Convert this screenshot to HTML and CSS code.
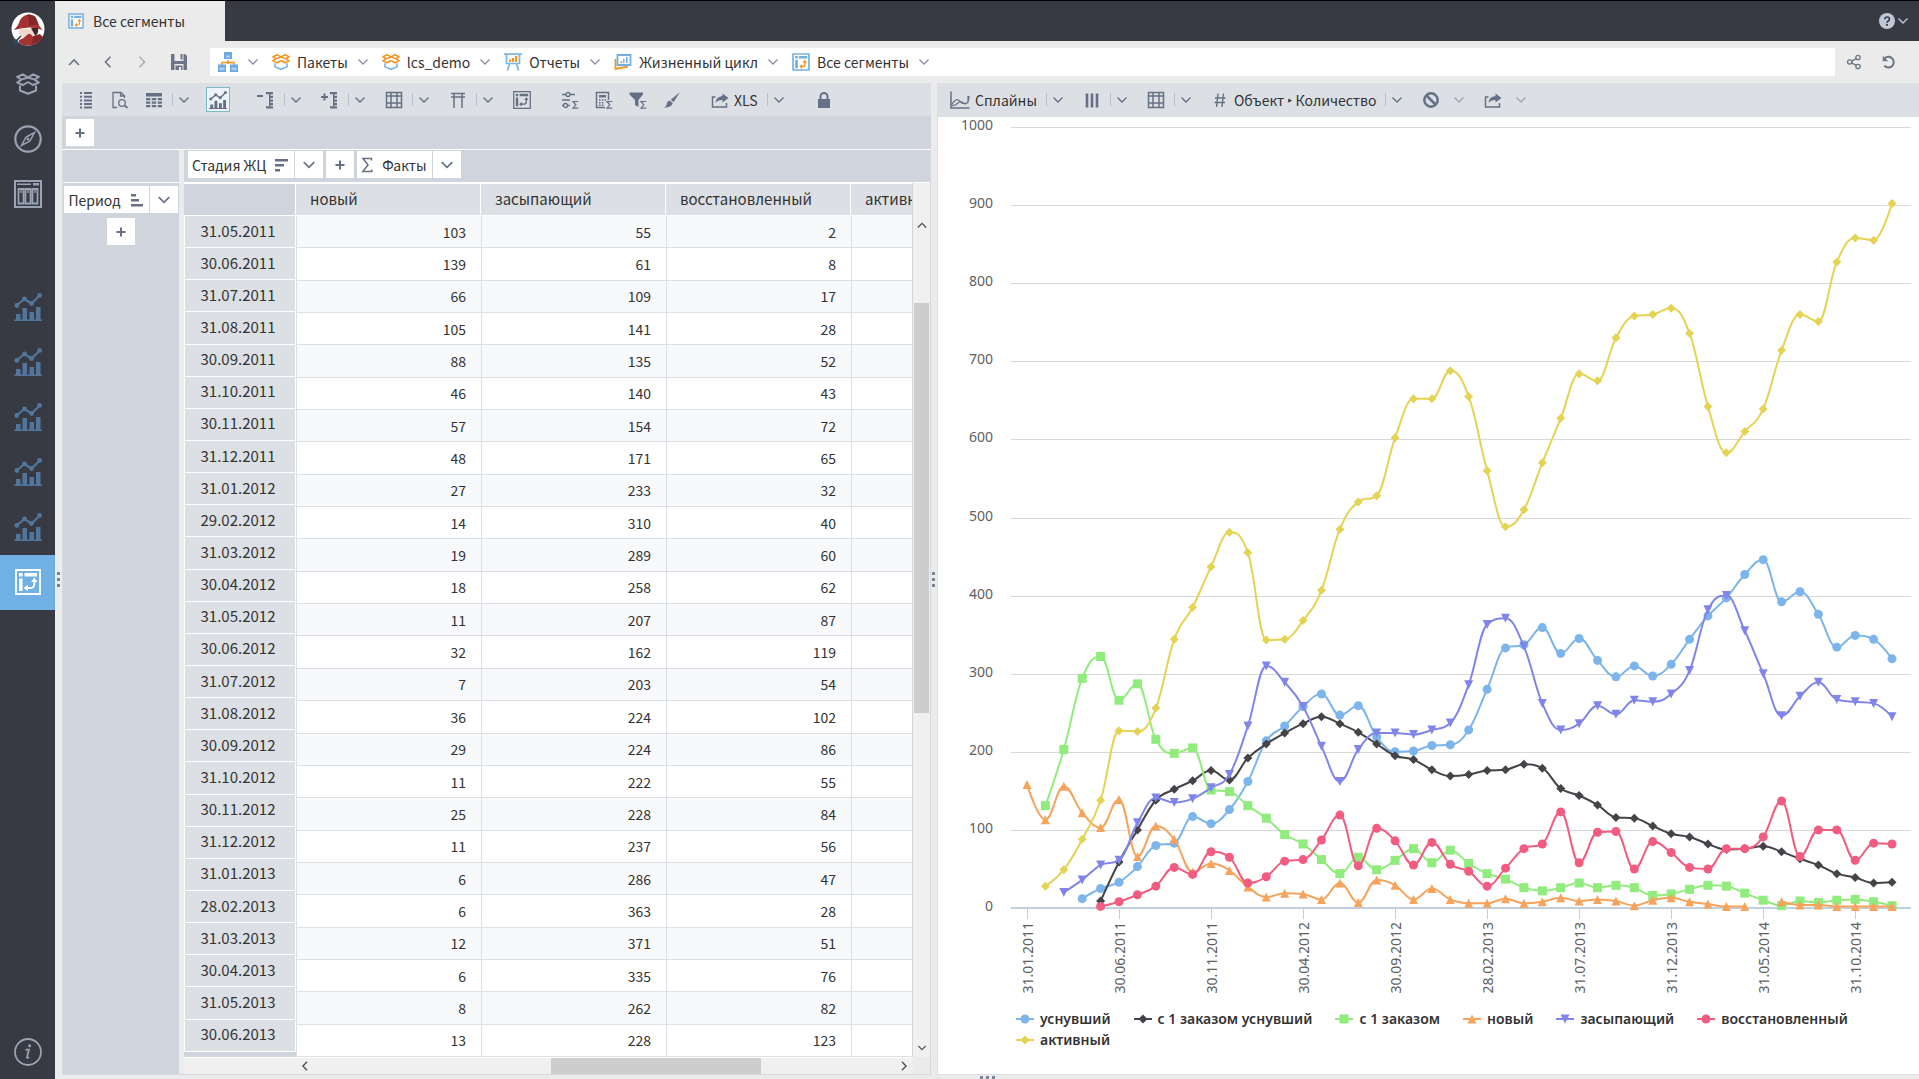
FILE: index.html
```html
<!DOCTYPE html>
<html lang="ru">
<head>
<meta charset="utf-8">
<meta name="viewport" content="width=device-width, initial-scale=1">
<title>Все сегменты</title>
<link rel="stylesheet" href="styles.css">
</head>
<body>
<svg class="defs" aria-hidden="true">
  <symbol id="i-down" viewBox="0 0 12 12"><path d="M1.5 3.5 6 8l4.500-4.500" fill="none" stroke="currentColor" stroke-width="1.400"/></symbol>
  <symbol id="i-up" viewBox="0 0 12 12"><path d="M1 9l5-5 5 5" fill="none" stroke="currentColor" stroke-width="1.600"/></symbol>
  <symbol id="i-left" viewBox="0 0 12 12"><path d="M8.500.8 3.500 6l5 5.200" fill="none" stroke="currentColor" stroke-width="1.600"/></symbol>
  <symbol id="i-right" viewBox="0 0 12 12"><path d="M3.500.8 8.500 6l-5 5.200" fill="none" stroke="currentColor" stroke-width="1.600"/></symbol>
  <symbol id="i-save" viewBox="0 0 18 18"><path d="M1 1h3.500v7h9V1H15l2 2v14h-3.500v-6h-9v6H1zM10.500 1h2v5.500h-2zM5.500 12.500h7V17H11v-3H9v3H5.500z" fill="currentColor"/></symbol>
  <symbol id="i-box" viewBox="1 0 24 22"><g fill="none" stroke-width="2" stroke-linejoin="round"><path class="hi" d="M13 4.500 8 1.300 2.200 4l4.200 2.600zM13 4.500l5-3.200L23.800 4l-4.200 2.600zM6.400 6.600 2.200 9.500 8 12l5-3M19.600 6.600l4.200 2.900L18 12l-5-3" stroke="currentColor"/><path class="lo" d="M5 12.500v5l8 3.200 8-3.200v-5" stroke="currentColor"/></g></symbol>
  <symbol id="i-compass" viewBox="0 0 28 28"><g fill="none" stroke="currentColor"><circle cx="14" cy="14" r="12.700" stroke-width="2.200"/><path d="M20.500 7.500 16 16l-8.500 4.500L12 12z" stroke-width="1.500"/></g><circle cx="14" cy="14" r="1.500" fill="currentColor"/></symbol>
  <symbol id="i-cabinet" viewBox="0 0 28 28"><g fill="none" stroke="currentColor" stroke-width="2"><path d="M1 1h26v26H1z"/><path d="M4.500 9h5v14.500h-5zM11.500 9h5v14.500h-5zM18.500 9h5v14.500h-5z" stroke-width="1.800"/></g><path d="M3 3.500h14V5H3zM19 3h6v2.500h-6zM6.300 9h1.400v4H6.300zM13.300 9h1.400v4h-1.400zM20.300 9h1.400v4h-1.400z" fill="currentColor"/></symbol>
  <symbol id="i-chart" viewBox="0 0 28 28"><path d="M2.500 12.500 10.500 6l7 4.500 8.300-8" fill="none" stroke="currentColor" stroke-width="2.200"/><g fill="currentColor"><circle cx="2.800" cy="12.500" r="2.400"/><circle cx="10.500" cy="5.800" r="2.400"/><circle cx="17.500" cy="10.500" r="2.400"/><circle cx="25.600" cy="2.400" r="2.400"/><path d="M2 21h4.500v6H2zM8.500 15H13v12H8.500zM15.500 19H20v8h-4.500zM22 14h4.500v13H22zM0 26.500h28V28H0z"/></g></symbol>
  <symbol id="i-pivot" viewBox="0 0 26 26"><path d="M1 1h24v24H1z" fill="none" stroke="currentColor" stroke-width="1.800"/><path d="M4 4h3.500v3.500H4zM9.500 4H22v3.500H9.500zM4 9.500h3.500V22H4zM19.300 8.500l3.200 4.500h-6.400zM8.500 19l4.500-3.200v6.400z" fill="currentColor"/><path d="M19.300 12.500v2.500q0 4-4 4H12" fill="none" stroke="currentColor" stroke-width="1.800"/></symbol>
  <symbol id="i-pivot-color" viewBox="0 0 26 26"><path d="M1.500 1.500h23v23h-23z" fill="#fff" stroke="#74b0e2" stroke-width="2.400"/><path d="M4.500 4.500h4v3.500h-4zM10 4.500h12V8H10zM4.500 10h4v12h-4z" fill="#74b0e2"/><path d="M18.500 14v2.500q0 3-3 3H14" fill="none" stroke="#f7931e" stroke-width="2"/><path d="M18.500 9.500 22 14h-7zM10.500 19.500l4-3.500v7z" fill="#f7931e"/></symbol>
  <symbol id="i-info" viewBox="0 0 28 28"><circle cx="14" cy="14" r="13" fill="none" stroke="currentColor" stroke-width="1.800"/><path d="M12 11.500h3l-2 7.500q-.3 1.500 2.200.2M11.500 12.300l2-.8" fill="none" stroke="currentColor" stroke-width="1.700"/><circle cx="15.600" cy="7.800" r="1.500" fill="currentColor"/></symbol>
  <symbol id="i-list" viewBox="0 0 18 18"><path d="M3 1h2v2H3zM7 1h8v2H7zM3 4.700h2v2H3zM7 4.700h8v2H7zM3 8.400h2v2H3zM7 8.400h8v2H7zM3 12h2v2H3zM7 12h8v2H7zM3 15.600h2v2H3zM7 15.600h8v2H7z" fill="currentColor"/></symbol>
  <symbol id="i-preview" viewBox="0 0 18 18"><g fill="none" stroke="currentColor" stroke-width="1.300"><path d="M6 16.500H2V1.500h8L13.500 5v2M9.500 1.500V5h4"/><circle cx="11" cy="12" r="3.300"/><path d="m13.500 14.300 3 2.700" stroke-width="1.800"/></g></symbol>
  <symbol id="i-table" viewBox="0 0 18 18"><path d="M1 2h16v3.500H1zM1 7h4.300v2.200H1zM6.800 7h4.400v2.200H6.800zM12.700 7H17v2.200h-4.300zM1 10.500h4.300v2.200H1zM6.800 10.500h4.400v2.200H6.800zM12.700 10.500H17v2.200h-4.300zM1 14h4.300v2.200H1zM6.800 14h4.400v2.200H6.800zM12.700 14H17v2.200h-4.300z" fill="currentColor"/></symbol>
  <symbol id="i-collapse" viewBox="0 0 18 18"><path d="M0 4h6v2H0zM9 1h7v2.200H9zM12 4.800h4V7h-4zM12 8.500h4v2.200h-4zM12 12h4v2.200h-4zM9 15.300h7v2.200H9zM12 3h1.500v12H12z" fill="currentColor"/></symbol>
  <symbol id="i-expand" viewBox="0 0 18 18"><path d="M0 5h7v2H0zM2.500 2.500h2v7h-2zM9 1h7v2.200H9zM12 4.800h4V7h-4zM12 8.500h4v2.200h-4zM12 12h4v2.200h-4zM9 15.300h7v2.200H9zM12 3h1.500v12H12z" fill="currentColor"/></symbol>
  <symbol id="i-grid" viewBox="0 0 18 18"><path d="M1.500 1.500h15v15h-15zM6 1.500v15M12 1.500v15M1.500 5h15M1.500 12h15" fill="none" stroke="currentColor" stroke-width="1.500"/></symbol>
  <symbol id="i-merge" viewBox="0 0 18 18"><path d="M2 2.500h14M2 6h14M5 2.500V17M13 2.500V17" fill="none" stroke="currentColor" stroke-width="1.500"/></symbol>
  <symbol id="i-sliders" viewBox="0 0 18 18"><path d="M1 3.500h13M1 9h8M1 14.500h8" stroke="currentColor" stroke-width="1.600"/><circle cx="7" cy="3.500" r="2" fill="#dce0e4" stroke="currentColor" stroke-width="1.300"/><circle cx="4.500" cy="14.500" r="2" fill="#dce0e4" stroke="currentColor" stroke-width="1.300"/><path d="M17.300 10.500H12l2.800 3.300L12 17.200h5.300" fill="none" stroke="currentColor" stroke-width="1.200"/></symbol>
  <symbol id="i-calc" viewBox="0 0 18 18"><path d="M10 16.500H1.500v-15h12V9" fill="none" stroke="currentColor" stroke-width="1.500"/><path d="M4 4h7v2.500H4zM4 8.200h1.600v1.500H4zM6.800 8.200h1.600v1.500H6.800zM9.500 8.200h1.600v1.500H9.500zM4 11h1.600v1.500H4zM6.800 11h1.600v1.500H6.800zM4 13.500h1.600V15H4zM6.800 13.500h1.600V15H6.800z" fill="currentColor"/><path d="M17.300 10.500H12l2.800 3.300L12 17.200h5.300" fill="none" stroke="currentColor" stroke-width="1.200"/></symbol>
  <symbol id="i-filter" viewBox="0 0 18 18"><path d="M.5 1.500h13.500v2L9.500 9v7L6 14V9L.5 3.500z" fill="currentColor"/><path d="M17.300 10.500H12l2.800 3.300L12 17.200h5.300" fill="none" stroke="currentColor" stroke-width="1.200"/></symbol>
  <symbol id="i-brush" viewBox="0 0 18 18"><path d="M17 1 10.500 11.200 7.800 8.800zM7 9.800l2.700 2.500q-1 4.200-8.700 4.400 2.500-1 2.700-3.500Q4.200 9.800 7 9.800" fill="currentColor"/></symbol>
  <symbol id="i-export" viewBox="0 0 18 18"><path d="M4.500 6H1.500v10h14v-4" fill="none" stroke="currentColor" stroke-width="1.500"/><path d="M11.500 2.500 17.500 7l-6 4.500V9Q7 8.700 4.500 12 5 5.500 11.500 5z" fill="currentColor"/></symbol>
  <symbol id="i-lock" viewBox="0 0 18 18"><path d="M3 8h12v9H3z" fill="currentColor"/><path d="M5.500 8V5.500a3.500 3.500 0 0 1 7 0V8" fill="none" stroke="currentColor" stroke-width="2"/></symbol>
  <symbol id="i-spline" viewBox="0 0 20 18"><path d="M1 .5V17h18.500" fill="none" stroke="currentColor" stroke-width="1.500"/><path d="M1.500 14q4.500-8 8-4t8.500 1.500V5M2 15q4-1 6-3t4-1q3 3 5 1t2-7" fill="none" stroke="currentColor" stroke-width="1.200"/></symbol>
  <symbol id="i-bars" viewBox="0 0 18 18"><path d="M4 2.500v14M9 2.500v14M14 2.500v14" stroke="currentColor" stroke-width="2.600"/></symbol>
  <symbol id="i-hash" viewBox="0 0 18 18"><path d="M7 2.500 5.500 16M12.500 2.500 11 16M4 7h10.500M3.500 11.500H14" fill="none" stroke="currentColor" stroke-width="1.400"/></symbol>
  <symbol id="i-ban" viewBox="0 0 18 18"><g fill="none" stroke="currentColor" stroke-width="2.500"><circle cx="9" cy="9" r="6.700"/><path d="m4.500 4.500 9 9"/></g></symbol>
  <symbol id="i-share" viewBox="0 0 18 18"><g fill="none" stroke="currentColor" stroke-width="1.500"><circle cx="4.200" cy="9" r="2.400"/><circle cx="13.500" cy="4" r="2.400"/><circle cx="13.500" cy="14" r="2.400"/><path d="m6.400 8 5-2.800M6.400 10l5 2.800"/></g></symbol>
  <symbol id="i-undo" viewBox="0 0 18 18"><path d="M4.200 4.800a6 6 0 1 1-.5 8.200" fill="none" stroke="currentColor" stroke-width="2.300"/><path d="M2 2v6.200h6.200z" fill="currentColor"/></symbol>
  <symbol id="i-help" viewBox="0 0 18 18"><circle cx="9" cy="9" r="9" fill="currentColor"/><path d="M6.500 7q.2-2.500 2.700-2.500T11.700 7q0 1.200-1.400 2Q9 9.700 9 11" fill="none" stroke="#383a43" stroke-width="1.800"/><circle cx="9" cy="13.300" r="1.200" fill="#383a43"/></symbol>
  <symbol id="i-sitemap" viewBox="0 0 20 20"><path d="M10 8v4M4 13v-2.500h12V13" fill="none" stroke="#f7931e" stroke-width="1.600"/><path d="M6 0h8v7H6zM0 12.500h8V20H0zM12 12.500h8V20h-8z" fill="#6ba9e0"/><path d="M8 3.500h4v2H8zM1.500 15.500h5v2.700h-5zM13.500 15.500h5v2.700h-5z" fill="#a9d2f5"/></symbol>
  <symbol id="i-easel" viewBox="0 0 18 18"><path d="M2.500 2v8.500h13V2M0 1.200h18M5.500 11 3.500 17.500M12.500 11l2 6.500" fill="none" stroke="#7ab6e6" stroke-width="1.700"/><path d="M5 6.500h2V9H5zM8 5h2v4H8zM11 3h2v6h-2z" fill="#f7931e"/></symbol>
  <symbol id="i-slides" viewBox="0 0 18 18"><path d="M1.500 6v10l12.500-2.500" fill="none" stroke="#f7931e" stroke-width="1.800"/><path d="M3.500 2h13v10h-13z" fill="#fff" stroke="#74b0e2" stroke-width="1.800"/><path d="M6.500 8h1.500v2H6.500zM9 6h1.500v4H9zM12 4h1.500v6H12z" fill="#74b0e2"/></symbol>
  <symbol id="i-desc" viewBox="0 0 14 14"><path d="M0 1h13v2.500H0zM0 6h9v2.500H0zM0 11h5v2.500H0z" fill="currentColor"/></symbol>
  <symbol id="i-asc" viewBox="0 0 14 14"><path d="M1 1h5v2.500H1zM1 6h8v2.500H1zM1 11h12v2.500H1z" fill="currentColor"/></symbol>
  <symbol id="i-plus" viewBox="0 0 12 12"><path d="M6 1.500v9M1.500 6h9" stroke="currentColor" stroke-width="2"/></symbol>
  <symbol id="i-sigma" viewBox="0 0 12 16"><path d="M10.500 3.500V1.500H2L7 8l-5.200 6.500h9v-2" fill="none" stroke="currentColor" stroke-width="1.500"/></symbol>
  <symbol id="i-logo" viewBox="0 0 34 34"><circle cx="17" cy="17" r="16.500" fill="#fff"/><path d="M9 17h14l-1 9-6 1-6-3-2.500-3z" fill="#f0d9cc"/><path d="M3 18Q7 14 8 11q2-7.500 9-8.500 7.500-.5 9.500 7 1 4.500 5 8.500-6-2.500-13-2.500T3 18" fill="#a63232"/><path d="M17 2.500q7.500-.5 9.500 7l.8 3-9 1z" fill="#84282a"/><path d="M20 16h7q1 6-3 7.500z" fill="#3a2a2c"/><path d="M8 28q4-1 8.500-5.500 3-2 5 2L29 23l3 2q-4 8-14 8.500-5.500 0-10-2.500z" fill="#a63232"/><path d="M22 24l7-2 2.500 3Q28 31 21 33z" fill="#84282a"/><path d="M10 24l-4 4" stroke="#383a43" stroke-width="1.600"/><circle cx="4.500" cy="30" r="2.800" fill="#2f4760"/></symbol>
</svg>

<aside class="rail">
  <nav class="rail-group" aria-label="Разделы">
    <a class="rail-item" href="#" aria-label="Главная"><svg class="ic34"><use href="#i-logo"/></svg></a>
    <a class="rail-item" href="#" aria-label="Пакеты"><svg class="ic24"><use href="#i-box"/></svg></a>
    <a class="rail-item" href="#" aria-label="Навигатор"><svg class="ic28"><use href="#i-compass"/></svg></a>
    <a class="rail-item" href="#" aria-label="Архив"><svg class="ic28"><use href="#i-cabinet"/></svg></a>
  </nav>
  <nav class="rail-group rail-open" aria-label="Открытые отчеты">
    <a class="rail-item" href="#" aria-label="Отчет 1"><svg class="ic28"><use href="#i-chart"/></svg></a>
    <a class="rail-item" href="#" aria-label="Отчет 2"><svg class="ic28"><use href="#i-chart"/></svg></a>
    <a class="rail-item" href="#" aria-label="Отчет 3"><svg class="ic28"><use href="#i-chart"/></svg></a>
    <a class="rail-item" href="#" aria-label="Отчет 4"><svg class="ic28"><use href="#i-chart"/></svg></a>
    <a class="rail-item" href="#" aria-label="Отчет 5"><svg class="ic28"><use href="#i-chart"/></svg></a>
    <a class="rail-item active" href="#" aria-label="Все сегменты"><svg class="ic26"><use href="#i-pivot"/></svg></a>
  </nav>
  <a class="rail-item rail-info" href="#" aria-label="О системе"><svg class="ic28"><use href="#i-info"/></svg></a>
</aside>

<div class="app">
  <header class="titlebar">
    <a class="tab" href="#"><svg class="ic16"><use href="#i-pivot-color"/></svg>Все сегменты</a>
    <button class="help" aria-label="Справка"><svg class="ic16"><use href="#i-help"/></svg><svg class="ic12"><use href="#i-down"/></svg></button>
  </header>

  <div class="navbar">
    <div class="nav-tools">
      <button aria-label="Вверх"><svg class="ic12"><use href="#i-up"/></svg></button>
      <button aria-label="Назад"><svg class="ic12"><use href="#i-left"/></svg></button>
      <button class="dim" aria-label="Вперед"><svg class="ic12"><use href="#i-right"/></svg></button>
      <button aria-label="Сохранить"><svg class="ic18"><use href="#i-save"/></svg></button>
    </div>
    <nav class="crumbs" aria-label="Путь">
      <a href="#" aria-label="Корень"><svg class="ic20"><use href="#i-sitemap"/></svg><svg class="ic12 arrow"><use href="#i-down"/></svg></a>
      <a href="#"><svg class="ic18 duo"><use href="#i-box"/></svg>Пакеты<svg class="ic12 arrow"><use href="#i-down"/></svg></a>
      <a href="#"><svg class="ic18 duo"><use href="#i-box"/></svg>lcs_demo<svg class="ic12 arrow"><use href="#i-down"/></svg></a>
      <a href="#"><svg class="ic18"><use href="#i-easel"/></svg>Отчеты<svg class="ic12 arrow"><use href="#i-down"/></svg></a>
      <a href="#"><svg class="ic18"><use href="#i-slides"/></svg>Жизненный цикл<svg class="ic12 arrow"><use href="#i-down"/></svg></a>
      <a href="#"><svg class="ic18"><use href="#i-pivot-color"/></svg>Все сегменты<svg class="ic12 arrow"><use href="#i-down"/></svg></a>
    </nav>
    <div class="nav-end">
      <button aria-label="Поделиться"><svg class="ic16"><use href="#i-share"/></svg></button>
      <button aria-label="Обновить"><svg class="ic16"><use href="#i-undo"/></svg></button>
    </div>
  </div>

  <main class="work">
    <div class="grip grip-left"></div>
    <section class="pane pivot">
      <div class="toolbar">
        <div class="set">
          <button aria-label="Список"><svg class="ic18"><use href="#i-list"/></svg></button>
          <button aria-label="Просмотр"><svg class="ic18"><use href="#i-preview"/></svg></button>
          <button class="split" aria-label="Таблица"><svg class="ic18"><use href="#i-table"/></svg><i></i><svg class="ic12"><use href="#i-down"/></svg></button>
        </div>
        <button class="pressed" aria-label="График"><svg class="ic18"><use href="#i-chart"/></svg></button>
        <button class="split apart" aria-label="Свернуть"><svg class="ic18"><use href="#i-collapse"/></svg><i></i><svg class="ic12"><use href="#i-down"/></svg></button>
        <button class="split" aria-label="Развернуть"><svg class="ic18"><use href="#i-expand"/></svg><i></i><svg class="ic12"><use href="#i-down"/></svg></button>
        <button class="split" aria-label="Сетка"><svg class="ic18"><use href="#i-grid"/></svg><i></i><svg class="ic12"><use href="#i-down"/></svg></button>
        <button class="split" aria-label="Итоги"><svg class="ic18"><use href="#i-merge"/></svg><i></i><svg class="ic12"><use href="#i-down"/></svg></button>
        <button aria-label="Поворот"><svg class="ic18"><use href="#i-pivot"/></svg></button>
        <div class="set apart">
          <button aria-label="Параметры"><svg class="ic18"><use href="#i-sliders"/></svg></button>
          <button aria-label="Вычисления"><svg class="ic18"><use href="#i-calc"/></svg></button>
          <button aria-label="Фильтр"><svg class="ic18"><use href="#i-filter"/></svg></button>
          <button aria-label="Оформление"><svg class="ic18"><use href="#i-brush"/></svg></button>
        </div>
        <button class="split apart"><svg class="ic18"><use href="#i-export"/></svg>XLS<i></i><svg class="ic12"><use href="#i-down"/></svg></button>
        <button class="far" aria-label="Блокировка"><svg class="ic18"><use href="#i-lock"/></svg></button>
      </div>
      <div class="filters"><button class="chip add" aria-label="Добавить фильтр"><svg class="ic12"><use href="#i-plus"/></svg></button></div>
      <div class="axes">
        <div class="rows-zone">
          <div class="zone-head"></div>
          <div class="zone-body">
            <div class="pair"><button class="chip">Период<svg class="ic14"><use href="#i-asc"/></svg></button><button class="chip add" aria-label="Меню периода"><svg class="ic14"><use href="#i-down"/></svg></button></div>
            <button class="chip add" aria-label="Добавить строку"><svg class="ic12"><use href="#i-plus"/></svg></button>
          </div>
        </div>
        <div class="cols-zone">
          <div class="zone-head">
            <button class="chip">Стадия ЖЦ<svg class="ic14"><use href="#i-desc"/></svg></button><button class="chip add" aria-label="Меню стадии"><svg class="ic14"><use href="#i-down"/></svg></button>
            <button class="chip add gap" aria-label="Добавить столбец"><svg class="ic12"><use href="#i-plus"/></svg></button>
            <button class="chip gap"><svg class="sigma"><use href="#i-sigma"/></svg>Факты</button><button class="chip add" aria-label="Меню фактов"><svg class="ic14"><use href="#i-down"/></svg></button>
          </div>
          <div class="grid">
            <div class="dates"><table aria-label="Периоды"><thead><tr><th></th></tr></thead><tbody id="periods"></tbody></table></div>
            <div class="values"><table aria-label="Факты по стадиям"><thead><tr><th>новый</th><th>засыпающий</th><th>восстановленный</th><th>активный</th></tr></thead><tbody id="facts"></tbody></table></div>
            <div class="vscroll" aria-hidden="true"><svg class="ic10"><use href="#i-up"/></svg><div class="track"><span class="thumb"></span></div><svg class="ic10"><use href="#i-down"/></svg></div>
            <div class="hscroll" aria-hidden="true"><svg class="ic10"><use href="#i-left"/></svg><div class="track"><span class="thumb"></span></div><svg class="ic10"><use href="#i-right"/></svg></div>
          </div>
        </div>
      </div>
    </section>
    <section class="pane">
      <div class="grip grip-mid"></div>
      <div class="toolbar chart-tools">
        <button class="split"><svg class="ic20"><use href="#i-spline"/></svg>Сплайны<i></i><svg class="ic12"><use href="#i-down"/></svg></button>
        <button class="split" aria-label="Колонки"><svg class="ic18"><use href="#i-bars"/></svg><i></i><svg class="ic12"><use href="#i-down"/></svg></button>
        <button class="split" aria-label="Сетка"><svg class="ic18"><use href="#i-grid"/></svg><i></i><svg class="ic12"><use href="#i-down"/></svg></button>
        <button class="split"><svg class="ic18"><use href="#i-hash"/></svg><span>Объект ‣ Количество</span><i></i><svg class="ic12"><use href="#i-down"/></svg></button>
        <button class="split plain" aria-label="Отключить"><svg class="ic18"><use href="#i-ban"/></svg><svg class="ic12 dim"><use href="#i-down"/></svg></button>
        <button class="split plain" aria-label="Экспорт"><svg class="ic18"><use href="#i-export"/></svg><svg class="ic12 dim"><use href="#i-down"/></svg></button>
      </div>
      <div class="chart">
        <div class="plot" id="plot"></div>
        <ul class="legend" id="legend"></ul>
      </div>
      <div class="grip grip-bottom"></div>
    </section>
  </main>
</div>
<script src="app.js"></script>
</body>
</html>
```
FILE: styles.css
```css
* { box-sizing: border-box; }
body {
  margin: 0;
  border-top: 1px solid #000;
  min-height: 100vh;
  display: flex;
  background: #ebebeb;
  color: #333;
  font: 14px/20px "Noto Sans CJK SC", "Noto Sans", sans-serif;
}
button { border: 0; padding: 0; background: none; font: inherit; color: inherit; display: flex; align-items: center; justify-content: center; white-space: nowrap; }
a { color: inherit; text-decoration: none; }
svg { display: block; flex: none; }
.defs { position: absolute; width: 0; height: 0; }
.ic10 { width: 10px; height: 10px; }
.ic12 { width: 12px; height: 12px; }
.ic14 { width: 14px; height: 14px; }
.ic16 { width: 16px; height: 16px; }
.ic18 { width: 18px; height: 18px; }
.ic20 { width: 20px; height: 20px; }
.ic24 { width: 24px; height: 24px; }
.ic26 { width: 26px; height: 26px; }
.ic28 { width: 28px; height: 28px; }
.ic34 { width: 34px; height: 34px; }
.dim { opacity: .5; }

/* left rail */
.rail { width: 55px; flex: none; display: flex; flex-direction: column; background: #383a43; color: #9aa3b5; }
.rail-item { height: 55px; display: flex; align-items: center; justify-content: center; }
.rail-open { margin-top: 59px; color: #52769b; }
.rail-open .rail-item { padding-bottom: 2px; }
.rail-item.active { background: #70b0e4; color: #fff; }
.rail-info { margin-top: auto; }

.app { flex: 1; min-width: 0; display: flex; flex-direction: column; }

.titlebar { height: 40px; flex: none; display: flex; justify-content: space-between; background: #383a43; }
.tab { width: 170px; padding-left: 13px; display: flex; align-items: center; gap: 9px; background: #ebebeb; }
.help { gap: 2px; padding-right: 10px; color: #c0c8d6; }

.navbar { height: 42px; flex: none; display: flex; align-items: center; color: #6b7587; }
.nav-tools { width: 155px; padding-left: 13px; display: flex; align-items: center; gap: 22px; }
.crumbs { flex: 1; height: 28px; display: flex; align-items: center; gap: 13px; padding-left: 8px; background: #fff; color: #333; }
.crumbs a { display: flex; align-items: center; gap: 7px; white-space: nowrap; }
.crumbs .arrow { margin-left: 2px; color: #8a93a5; }
.duo { --hi: #f7931e; --lo: #74b0e2; }
.hi { stroke: var(--hi, currentColor); }
.lo { stroke: var(--lo, currentColor); }
.nav-end { width: 84px; padding-left: 11px; display: flex; align-items: center; gap: 19px; }

/* workspace */
.work { flex: 1; position: relative; margin-left: 7px; padding-bottom: 4px; display: grid; grid-template-columns: 869fr 982fr; column-gap: 6px; }
.pane { position: relative; min-width: 0; display: flex; flex-direction: column; }
.grip { position: absolute; color: #7c8596; }
.grip::before { content: ""; display: block; width: 3px; height: 15px; background: repeating-linear-gradient(currentColor 0 3px, transparent 3px 6px); }
.grip-left { left: -5px; top: 489px; }
.grip-mid { left: -5px; top: 489px; }
.grip-bottom { left: 43px; bottom: -4px; }
.grip-bottom::before { width: 15px; height: 3px; background: repeating-linear-gradient(to right, currentColor 0 3px, transparent 3px 6px); }

.toolbar { height: 33px; flex: none; display: flex; align-items: center; gap: 16px; padding-left: 12px; background: #dce0e4; color: #333; }
.toolbar button { min-width: 24px; height: 25px; }
.toolbar svg { color: #667085; }
.set { display: flex; gap: 10px; }
.apart { margin-left: 8px; }
.far { margin-left: 11px; }
.toolbar .split { justify-content: flex-start; gap: 5px; padding-left: 3px; }
.split i { width: 1px; height: 13px; margin-left: 4px; background: #b9c0cb; }
.toolbar .pressed { border: 1px solid #7fb9c9; background: #edf3fa; }
.chart-tools { padding-left: 10px; }
.chart-tools .plain { gap: 13px; }

.filters { height: 34px; flex: none; padding: 3px 4px; background: #d0d4dd; border-bottom: 1px solid #fff; }
.chip { height: 27px; padding: 0 5px 0 4px; gap: 9px; background: #fff; }
.chip svg { color: #667085; }
.chip.add { width: 28px; padding: 0; }
.axes { flex: 1; display: flex; gap: 5px; border: solid #d4d8e0; border-width: 0 1px 1px; }
.rows-zone { width: 116px; flex: none; display: flex; flex-direction: column; }
.zone-head { height: 33px; flex: none; display: flex; gap: 1px; padding: 1px 4px; background: #d0d4dd; border-bottom: 1px solid #fff; }
.gap { margin-left: 2px; }
.zone-body { flex: 1; display: flex; flex-direction: column; align-items: center; gap: 5px; padding-top: 3px; background: #d0d4dd; }
.pair { display: flex; gap: 1px; }
.sigma { width: 12px; height: 16px; }
.cols-zone { flex: 1; min-width: 0; display: flex; flex-direction: column; }

.grid { flex: 1; display: grid; grid-template-columns: 112px minmax(0, 1fr) 17px; grid-template-rows: minmax(0, 1fr) 17px; }
.grid table { border-collapse: separate; border-spacing: 0; table-layout: fixed; height: 100%; }
.grid th { font-weight: 400; font-size: 15px; background: #dce0e4; padding: 0 0 2px; }
.grid thead th { height: 33px; border-top: 1px solid #fff; border-bottom: 1px solid #fff; border-right: 1px solid #fff; }
.dates { padding-bottom: 5px; background: #d0d4dd; }
.dates table { width: 112px; }
.dates thead th { background: #d0d4dd; }
.dates tbody th { border-bottom: 1px solid #fff; border-left: 1px solid #fff; border-right: 1px solid #fff; padding-right: 4px; }
.values { overflow: hidden; background: #fff; border-right: 1px solid #d0d4dd; }
.values table { width: 740px; }
.values thead th { text-align: left; padding-left: 14px; }
.values td { text-align: right; padding: 0 15px 0 0; border-left: 1px solid #dcdfe6; border-bottom: 1px solid #dcdfe6; }
.values tr:nth-child(odd) td { background: #f8f9fb; }
.vscroll, .hscroll { display: flex; align-items: center; justify-content: space-between; background: #f0f0f0; color: #505050; }
.vscroll { flex-direction: column; padding: 37px 0 4px; }
.hscroll { grid-column: 1 / 3; padding: 0 4px 0 116px; border-top: 1px solid #fff; }
.track { flex: 1; align-self: stretch; display: flex; }
.vscroll .track { flex-direction: column; }
.vscroll .track::before { content: ""; flex: 72; }
.vscroll .thumb { flex: 407; margin: 0 1px; background: #cdcdcd; }
.vscroll .track::after { content: ""; flex: 328; }
.hscroll .track::before { content: ""; flex: 238; }
.hscroll .thumb { flex: 208; background: #cdcdcd; }
.hscroll .track::after { content: ""; flex: 136; }

/* chart */
.chart { flex: 1; display: flex; flex-direction: column; background: #fff; border: 1px solid #dcdfe6; border-right: 0; }
.plot { flex: 1; min-height: 300px; position: relative; }
.plot svg { position: absolute; inset: 0; width: 100%; height: 100%; overflow: visible; }
.plot text { font: 14px "Noto Sans", sans-serif; fill: #606060; }
.legend { margin: 0; padding: 10px 8px 24px 78px; list-style: none; display: flex; flex-wrap: wrap; column-gap: 23px; font: 600 14px/21px "Noto Sans", sans-serif; }
.legend li { display: flex; align-items: center; gap: 6px; }
.legend svg { width: 18px; height: 12px; }
```
FILE: app.js
```js
const FIRST_TABLE_MONTH = 4;
const TABLE_ROWS = 26;
const MONTHS = 48;

const series = [
  { name: 'уснувший', color: '#7cb5ec', shape: 'circle', start: 3, data: [12, 25, 33, 53, 80, 83, 117, 108, 126, 162, 214, 233, 258, 274, 247, 259, 219, 200, 201, 208, 209, 228, 280, 333, 337, 359, 326, 345, 317, 296, 310, 297, 312, 344, 374, 397, 427, 446, 392, 405, 376, 334, 349, 344, 319] },
  { name: 'с 1 заказом уснувший', color: '#434348', shape: 'diamond', start: 4, data: [9, 59, 100, 138, 152, 163, 176, 164, 192, 210, 224, 236, 245, 236, 225, 210, 195, 190, 177, 169, 171, 176, 177, 184, 179, 153, 144, 132, 116, 115, 105, 95, 91, 82, 75, 76, 79, 72, 63, 55, 44, 39, 32, 33] },
  { name: 'с 1 заказом', color: '#90ed7d', shape: 'square', start: 1, data: [131, 203, 294, 322, 266, 287, 216, 198, 205, 151, 149, 131, 115, 94, 82, 62, 44, 65, 49, 61, 76, 58, 74, 57, 44, 37, 26, 22, 26, 32, 26, 29, 26, 16, 18, 24, 29, 28, 19, 10, 3, 9, 7, 10, 11, 8, 3] },
  { name: 'новый', color: '#f7a35c', shape: 'triangle', start: 0, data: [158, 113, 156, 122, 103, 139, 66, 105, 88, 46, 57, 48, 27, 14, 19, 18, 11, 32, 7, 36, 29, 11, 25, 11, 6, 6, 12, 6, 8, 13, 9, 11, 9, 3, 10, 13, 8, 5, 2, 2, null, 8, 4, 4, 2, 2, 2, 2] },
  { name: 'засыпающий', color: '#8085e9', shape: 'triangle-down', start: 2, data: [20, 36, 55, 61, 109, 141, 135, 140, 154, 171, 233, 310, 289, 258, 207, 162, 203, 224, 224, 222, 228, 237, 286, 363, 371, 335, 262, 228, 236, 259, 248, 266, 264, 274, 304, 382, 400, 355, 300, 246, 271, 289, 267, 264, 262, 245] },
  { name: 'восстановленный', color: '#f15c80', shape: 'circle', start: 4, data: [2, 8, 17, 28, 52, 43, 72, 65, 32, 40, 60, 62, 87, 119, 54, 102, 86, 55, 84, 56, 47, 28, 51, 76, 82, 123, 58, 97, 98, 50, 85, 71, 52, 50, 76, 76, 91, 137, 66, 100, 100, 61, 83, 82] },
  { name: 'активный', color: '#e4d354', shape: 'diamond', start: 1, data: [28, 49, 88, 138, 227, 226, 256, 344, 385, 437, 481, 455, 343, 344, 368, 407, 485, 520, 528, 602, 652, 652, 688, 655, 560, 488, 510, 570, 627, 684, 675, 730, 758, 760, 768, 736, 642, 583, 610, 639, 714, 760, 751, 827, 858, 855, 902] }
];

function monthEnd(index) {
  const d = new Date(Date.UTC(2011, index + 1, 0));
  return [d.getUTCDate(), d.getUTCMonth() + 1, d.getUTCFullYear()].map(n => String(n).padStart(2, '0')).join('.');
}

function fillTables() {
  const columns = [series[3], series[4], series[5]];
  let dates = '';
  let facts = '';
  for (let i = FIRST_TABLE_MONTH; i < FIRST_TABLE_MONTH + TABLE_ROWS; i++) {
    dates += `<tr><th scope="row">${monthEnd(i)}</th></tr>`;
    facts += `<tr>${columns.map(s => `<td>${s.data[i - s.start]}</td>`).join('')}<td></td></tr>`;
  }
  document.getElementById('periods').innerHTML = dates;
  document.getElementById('facts').innerHTML = facts;
}

function marker(shape, x, y, color) {
  const r = 4.5;
  if (shape === 'circle') return `<circle cx="${x}" cy="${y}" r="${r}" fill="${color}"/>`;
  const points = {
    diamond: [[0, -r], [r, 0], [0, r], [-r, 0]],
    square: [[-r, -r], [r, -r], [r, r], [-r, r]],
    triangle: [[0, -r], [r, r], [-r, r]],
    'triangle-down': [[-r, -r], [r, -r], [0, r]]
  }[shape];
  return `<polygon points="${points.map(p => `${x + p[0]},${y + p[1]}`).join(' ')}" fill="${color}"/>`;
}

/* smooth curve whose control points never overshoot the neighbours */
function splinePath(pts) {
  let d = `M${pts[0].x} ${pts[0].y}`;
  let out = pts[0];
  for (let i = 1; i < pts.length; i++) {
    const a = pts[i - 1], p = pts[i], b = pts[i + 1];
    let left = { x: p.x, y: p.y }, right = p;
    if (b) {
      left = { x: (1.5 * p.x + a.x) / 2.5, y: (1.5 * p.y + a.y) / 2.5 };
      right = { x: (1.5 * p.x + b.x) / 2.5, y: (1.5 * p.y + b.y) / 2.5 };
      const fix = (right.y - left.y) * (right.x - p.x) / (right.x - left.x) + p.y - right.y;
      left.y += fix;
      right.y += fix;
      const hiA = Math.max(a.y, p.y), loA = Math.min(a.y, p.y);
      if (left.y > hiA || left.y < loA) {
        left.y = left.y > hiA ? hiA : loA;
        right.y = 2 * p.y - left.y;
      }
      const hiB = Math.max(b.y, p.y), loB = Math.min(b.y, p.y);
      if (right.y > hiB || right.y < loB) {
        right.y = right.y > hiB ? hiB : loB;
        left.y = 2 * p.y - right.y;
      }
    }
    d += `C${out.x} ${out.y} ${left.x} ${left.y} ${p.x} ${p.y}`;
    out = right;
  }
  return d;
}

function drawChart() {
  const box = document.getElementById('plot');
  const w = box.clientWidth, h = box.clientHeight;
  const left = 73, right = w - 8, top = 10, bottom = h - 90;
  const step = (right - left - 35) / (MONTHS - 1);
  const px = i => left + 16 + i * step;
  const py = v => bottom - v * (bottom - top) / 1000;
  let out = '';
  for (let v = 0; v <= 1000; v += 100) {
    const y = Math.round(py(v)) + 0.5;
    if (v) out += `<path d="M${left} ${y}H${right}" stroke="#d8d8d8"/>`;
    out += `<text x="${left - 18}" y="${y + 2}" text-anchor="end">${v}</text>`;
  }
  out += `<path d="M${left} ${bottom}H${right}" stroke="#c0d0e0" stroke-width="2"/>`;
  for (let i = 0; i < MONTHS; i += 5) {
    const x = Math.round(px(i)) + 0.5;
    out += `<path d="M${x} ${bottom}v11" stroke="#c0d0e0"/>`;
    out += `<text transform="translate(${x + 5} ${bottom + 14}) rotate(-90)" text-anchor="end">${monthEnd(i)}</text>`;
  }
  for (const s of series) {
    const runs = [[]];
    s.data.forEach((v, i) => v === null ? runs.push([]) : runs[runs.length - 1].push({ x: px(i + s.start), y: py(v) }));
    for (const run of runs) {
      out += `<path d="${splinePath(run)}" fill="none" stroke="${s.color}" stroke-width="2"/>`;
      out += run.map(p => marker(s.shape, p.x, p.y, s.color)).join('');
    }
  }
  box.innerHTML = `<svg role="img" aria-label="Динамика сегментов">${out}</svg>`;
}

document.getElementById('legend').innerHTML = series.map(s =>
  `<li><svg viewBox="0 0 18 12"><path d="M0 6h18" stroke="${s.color}" stroke-width="2"/>${marker(s.shape, 9, 6, s.color)}</svg>${s.name}</li>`
).join('');
fillTables();
drawChart();
window.addEventListener('resize', drawChart);
```
